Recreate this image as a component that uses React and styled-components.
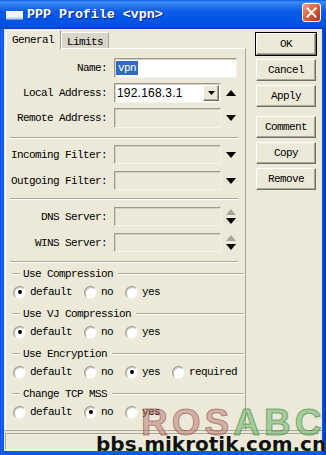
import React from "react";
import styled, { createGlobalStyle } from "styled-components";

const GlobalStyle = createGlobalStyle`
  html, body {
    margin: 0;
    padding: 0;
  }
  body {
    width: 326px;
    height: 455px;
    overflow: hidden;
    background: #fff;
  }
`;

const mono = `"Liberation Mono", "DejaVu Sans Mono", monospace`;

const Window = styled.div`
  position: relative;
  width: 326px;
  height: 455px;
  box-sizing: border-box;
  display: flex;
  flex-direction: column;
  background: linear-gradient(to right, #0831d9 0, #1c6ef0 1px, #0558e8 3px, #0558e8 322px, #0048d8 324px, #0030b0 326px);
  overflow: hidden;
  font-family: ${mono};
  font-size: 11px;
  letter-spacing: -0.6px;
  color: #000;
`;

const TitleBar = styled.div`
  height: 29px;
  flex: none;
  display: flex;
  align-items: center;
  padding: 0 6px;
  box-sizing: border-box;
  background: linear-gradient(to bottom, #0a5ae6 0%, #3e8ff7 7%, #2a78ee 18%, #0c5be6 40%, #0055e5 70%, #0052e0 88%, #0042c8 100%);
`;

const TitleIcon = styled.div`
  width: 17px;
  height: 8px;
  margin-top: 1px;
  background: linear-gradient(to bottom, #ffffff 0%, #eef4ff 70%, #a8c4f0 100%);
  border-bottom: 1px solid #6a95d8;
`;

const TitleText = styled.div`
  margin-left: 4px;
  color: #fff;
  font-family: ${mono};
  font-weight: bold;
  font-size: 13.3px;
  letter-spacing: 0;
  text-shadow: 1px 1px 0 #0a2a8a;
  flex: 1;
`;

const CloseButton = styled.div`
  width: 19px;
  height: 19px;
  margin-top: -4px;
  margin-right: -1px;
  box-sizing: border-box;
  border: 1px solid #fff;
  border-radius: 3px;
  background: linear-gradient(135deg, #ee9e84 0%, #e0704e 35%, #cf4a28 70%, #b83418 100%);
  display: flex;
  align-items: center;
  justify-content: center;
`;

const Client = styled.div`
  flex: 1;
  margin: 0 4px 4px;
  background: #ece9d8;
  display: flex;
  flex-direction: column;
`;

const Main = styled.div`
  height: 401px;
  flex: none;
  display: flex;
`;

const LeftCol = styled.div`
  width: 241px;
  margin-left: 1px;
  padding-top: 1px;
  display: flex;
  flex-direction: column;
`;

const TabRow = styled.div`
  height: 18px;
  display: flex;
  align-items: flex-end;
  position: relative;
  z-index: 1;
  padding-left: 1px;
`;

const Tab = styled.div`
  box-sizing: border-box;
  height: ${(p) => (p.$active ? "19px" : "16px")};
  margin-bottom: ${(p) => (p.$active ? "-1px" : "0")};
  padding: ${(p) => (p.$active ? "2px 6px 0 5px" : "2px 5px 0 5px")};
  background: ${(p) => (p.$active ? "#ece9d8" : "#d9d5c8")};
  border-top: 1px solid #fff;
  border-left: 1px solid #fff;
  border-right: 1px solid ${(p) => (p.$active ? "#9c9a8c" : "#aca899")};
  line-height: 14px;
`;

const Panel = styled.div`
  flex: 1;
  box-sizing: border-box;
  border-top: 1px solid #fff;
  border-left: 1px solid #fff;
  border-right: 1px solid #aca899;
  display: flex;
  flex-direction: column;
`;

const Section = styled.div`
  display: flex;
  flex-direction: column;
  gap: ${(p) => p.$gap}px;
  padding-top: ${(p) => p.$top}px;
  padding-bottom: ${(p) => p.$bottom}px;
`;

const Separator = styled.div`
  height: 1px;
  margin-left: 4px;
  width: 228px;
  background: #aca899;
  border-bottom: 1px solid #fff;
`;

const FieldRow = styled.div`
  display: flex;
  align-items: center;
  height: ${(p) => p.$h}px;
`;

const Label = styled.div`
  width: 101px;
  text-align: right;
  margin-right: 7px;
  white-space: nowrap;
`;

const Sunken = styled.div`
  box-sizing: border-box;
  height: 100%;
  width: ${(p) => p.$w}px;
  border: 1px solid;
  border-color: #9c9a8c #f4f3ee #f4f3ee #9c9a8c;
  box-shadow: inset 1px 1px 0 #d4d0c4;
  background: ${(p) => (p.$disabled ? "#ece9d8" : "#fff")};
  display: flex;
  align-items: center;
`;

const Selected = styled.span`
  margin-left: 1px;
  padding: 1px 2px;
  background: #316ac5;
  color: #fff;
  line-height: 12px;
`;

const IpText = styled.span`
  flex: 1;
  padding-left: 2px;
  font-family: "Liberation Sans", Arial, sans-serif;
  font-size: 12px;
  letter-spacing: 0.2px;
`;

const DropButton = styled.div`
  box-sizing: border-box;
  width: 16px;
  height: 16px;
  margin-right: 1px;
  border: 1px solid;
  border-color: #fff #716f64 #716f64 #fff;
  box-shadow: inset -1px -1px 0 #aca899;
  background: #ece9d8;
  display: flex;
  align-items: center;
  justify-content: center;
`;

const ArrowSlot = styled.div`
  width: 12px;
  margin-left: 4px;
  display: flex;
  flex-direction: column;
  align-items: center;
  gap: 3px;
`;

const Groups = styled.div`
  display: flex;
  flex-direction: column;
  gap: 7px;
  padding-top: 4px;
`;

const Group = styled.div`
  display: flex;
  flex-direction: column;
  gap: 3px;
`;

const GroupTitle = styled.div`
  height: 14px;
  display: flex;
  align-items: center;
  padding-left: 6px;
  width: 232px;
  &::before,
  &::after {
    content: "";
    height: 1px;
    background: #aca899;
    border-bottom: 1px solid #fff;
  }
  &::before {
    width: 8px;
    margin-right: 3px;
  }
  &::after {
    flex: 1;
    margin-left: 5px;
  }
`;

const RadioRow = styled.div`
  height: 16px;
  display: flex;
  align-items: center;
  padding-left: 7px;
`;

const RadioItem = styled.div`
  display: flex;
  align-items: center;
  margin-right: 12px;
  gap: 4px;
`;

const RadioCircle = styled.div`
  box-sizing: border-box;
  width: 13px;
  height: 13px;
  border-radius: 50%;
  border: 1px solid;
  border-color: #9c9a8c #f4f3ee #f4f3ee #9c9a8c;
  box-shadow: inset 1px 1px 0 #c8c5b8;
  background: #fff;
  display: flex;
  align-items: center;
  justify-content: center;
  &::after {
    content: "";
    width: 4px;
    height: 4px;
    border-radius: 50%;
    background: ${(p) => (p.$checked ? "#000" : "transparent")};
  }
`;

const ButtonCol = styled.div`
  width: 60px;
  margin-left: 10px;
  padding-top: 4px;
  display: flex;
  flex-direction: column;
  gap: 4px;
`;

const Button = styled.div`
  box-sizing: border-box;
  height: 22px;
  width: 60px;
  margin-top: ${(p) => p.$mt || 0}px;
  border: 1px solid;
  border-color: #fff #716f64 #716f64 #fff;
  box-shadow: inset -1px -1px 0 #aca899 ${(p) => (p.$default ? ", 0 0 0 1px #000" : "")};
  background: #ece9d8;
  display: flex;
  align-items: center;
  justify-content: center;
`;

const StatusArea = styled.div`
  flex: 1;
  border-top: 1px solid #aca899;
  padding: 2px 2px 1px 1px;
  display: flex;
  flex-direction: column;
`;

const StatusBox = styled.div`
  flex: 1;
  border: 1px solid;
  border-color: #aca899 #fff #fff #aca899;
`;

const Watermark = styled.div`
  position: absolute;
  left: 141px;
  top: 404px;
  font-family: "Liberation Sans", Arial, sans-serif;
  font-weight: bold;
  font-size: 37px;
  line-height: 37px;
  letter-spacing: 4px;
  pointer-events: none;
  white-space: nowrap;
`;

const WmPart = styled.span`
  color: ${(p) => p.$fill};
  -webkit-text-stroke: 1px ${(p) => p.$edge};
`;

const SiteText = styled.div`
  position: absolute;
  left: 96px;
  top: 434px;
  font-family: "DejaVu Sans", Verdana, sans-serif;
  font-weight: bold;
  font-size: 20px;
  line-height: 20px;
  letter-spacing: 0;
  color: #111;
  white-space: nowrap;
  text-shadow: 0 0 1px rgba(255, 255, 255, 0.6);
`;

function Arrow({ dir, color = "#000" }) {
  return (
    <svg width="10" height="6" viewBox="0 0 10 6">
      {dir === "up" ? (
        <polygon points="0,6 10,6 5,0" fill={color} />
      ) : (
        <polygon points="0,0 10,0 5,6" fill={color} />
      )}
    </svg>
  );
}

function SmallDown() {
  return (
    <svg width="7" height="4" viewBox="0 0 7 4">
      <polygon points="0,0 7,0 3.5,4" fill="#000" />
    </svg>
  );
}

function Radio({ label, checked }) {
  return (
    <RadioItem>
      <RadioCircle $checked={checked} />
      <span>{label}</span>
    </RadioItem>
  );
}

const groups = [
  { title: "Use Compression", options: ["default", "no", "yes"], value: "default" },
  { title: "Use VJ Compression", options: ["default", "no", "yes"], value: "default" },
  { title: "Use Encryption", options: ["default", "no", "yes", "required"], value: "yes" },
  { title: "Change TCP MSS", options: ["default", "no", "yes"], value: "no" },
];

export default function App() {
  return (
    <Window>
      <GlobalStyle />
      <TitleBar>
        <TitleIcon />
        <TitleText>PPP Profile &lt;vpn&gt;</TitleText>
        <CloseButton>
          <svg width="11" height="11" viewBox="0 0 11 11">
            <path d="M1.5 1.5 L9.5 9.5 M9.5 1.5 L1.5 9.5" stroke="#fff" strokeWidth="2" strokeLinecap="square" />
          </svg>
        </CloseButton>
      </TitleBar>
      <Client>
        <Main>
          <LeftCol>
            <TabRow>
              <Tab $active>General</Tab>
              <Tab>Limits</Tab>
            </TabRow>
            <Panel>
              <Section $gap={5} $top={9} $bottom={9}>
                <FieldRow $h={20}>
                  <Label>Name:</Label>
                  <Sunken $w={123}>
                    <Selected>vpn</Selected>
                  </Sunken>
                </FieldRow>
                <FieldRow $h={20}>
                  <Label>Local Address:</Label>
                  <Sunken $w={107}>
                    <IpText>192.168.3.1</IpText>
                    <DropButton>
                      <SmallDown />
                    </DropButton>
                  </Sunken>
                  <ArrowSlot>
                    <Arrow dir="up" />
                  </ArrowSlot>
                </FieldRow>
                <FieldRow $h={20}>
                  <Label>Remote Address:</Label>
                  <Sunken $w={107} $disabled />
                  <ArrowSlot>
                    <Arrow dir="down" />
                  </ArrowSlot>
                </FieldRow>
              </Section>
              <Separator />
              <Section $gap={7} $top={6} $bottom={8}>
                <FieldRow $h={19}>
                  <Label>Incoming Filter:</Label>
                  <Sunken $w={107} $disabled />
                  <ArrowSlot>
                    <Arrow dir="down" />
                  </ArrowSlot>
                </FieldRow>
                <FieldRow $h={19}>
                  <Label>Outgoing Filter:</Label>
                  <Sunken $w={107} $disabled />
                  <ArrowSlot>
                    <Arrow dir="down" />
                  </ArrowSlot>
                </FieldRow>
              </Section>
              <Separator />
              <Section $gap={7} $top={7} $bottom={9}>
                <FieldRow $h={19}>
                  <Label>DNS Server:</Label>
                  <Sunken $w={107} $disabled />
                  <ArrowSlot>
                    <Arrow dir="up" color="#a8a698" />
                    <Arrow dir="down" />
                  </ArrowSlot>
                </FieldRow>
                <FieldRow $h={19}>
                  <Label>WINS Server:</Label>
                  <Sunken $w={107} $disabled />
                  <ArrowSlot>
                    <Arrow dir="up" color="#a8a698" />
                    <Arrow dir="down" />
                  </ArrowSlot>
                </FieldRow>
              </Section>
              <Separator />
              <Groups>
                {groups.map((g) => (
                  <Group key={g.title}>
                    <GroupTitle>{g.title}</GroupTitle>
                    <RadioRow>
                      {g.options.map((o) => (
                        <Radio key={o} label={o} checked={o === g.value} />
                      ))}
                    </RadioRow>
                  </Group>
                ))}
              </Groups>
            </Panel>
          </LeftCol>
          <ButtonCol>
            <Button $default>OK</Button>
            <Button>Cancel</Button>
            <Button>Apply</Button>
            <Button $mt={5}>Comment</Button>
            <Button>Copy</Button>
            <Button>Remove</Button>
          </ButtonCol>
        </Main>
        <StatusArea>
          <StatusBox />
        </StatusArea>
      </Client>
      <Watermark>
        <WmPart $fill="rgba(185, 120, 115, 0.5)" $edge="rgba(130, 55, 50, 0.5)">ROS</WmPart>
        <WmPart $fill="rgba(105, 180, 105, 0.55)" $edge="rgba(45, 120, 45, 0.55)">ABC</WmPart>
      </Watermark>
      <SiteText>bbs.mikrotik.com.cn</SiteText>
    </Window>
  );
}
